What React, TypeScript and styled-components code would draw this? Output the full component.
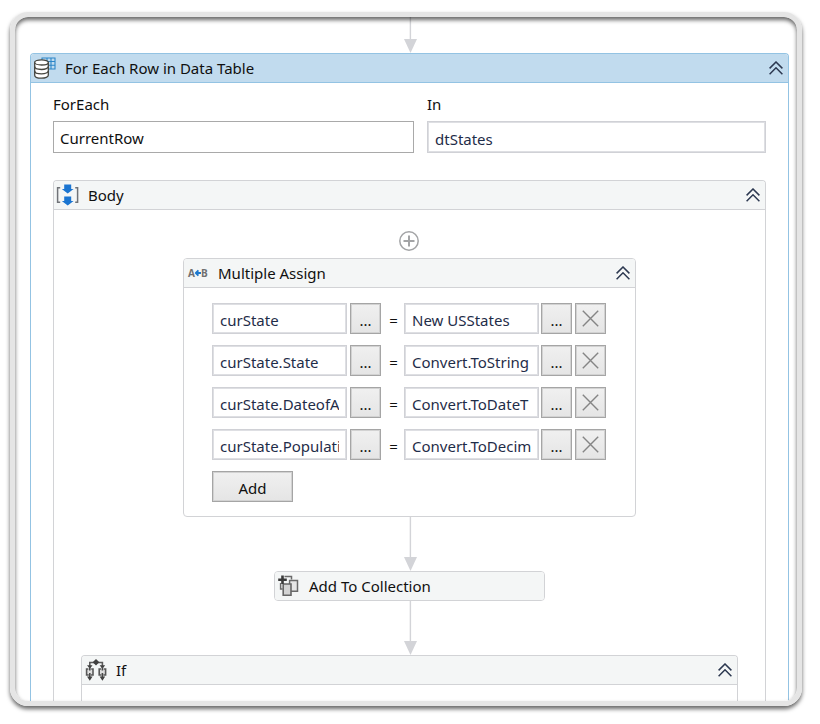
import React, { useState } from "react";
import styled, { createGlobalStyle, css } from "styled-components";

const GlobalStyle = createGlobalStyle`
  *, *::before, *::after {
    box-sizing: border-box;
  }
  body {
    margin: 0;
    background: #ffffff;
    color: #101010;
    font-family: "Noto Sans", "Open Sans", sans-serif;
    font-size: 15px;
    line-height: 20px;
  }
  input, button {
    font: inherit;
    color: inherit;
  }
`;

const Frame = styled.main`
  position: relative;
  margin: 12px 18px 18px 10px;
  padding: 0 8px 0 15px;
  border: 5px solid #e5e5e5;
  border-radius: 18px;
  overflow: hidden;
  box-shadow: 0 3px 4px rgba(0, 0, 0, 0.6);

  &::after {
    content: "";
    position: absolute;
    inset: 0;
    border-radius: 13px;
    box-shadow: inset 0 3px 4px rgba(0, 0, 0, 0.6);
    pointer-events: none;
  }
`;

const Flow = styled.div`
  display: flex;
  flex-direction: column;
  align-items: center;
`;

const borderTone = { active: "#93c3e3", plain: "#d2d3d6" };
type Tone = keyof typeof borderTone;

const Card = styled.section<{ $tone?: Tone; $open?: boolean; $width?: string }>`
  width: ${(p) => p.$width ?? "100%"};
  max-width: 100%;
  border: 1px solid ${(p) => borderTone[p.$tone ?? "plain"]};
  border-radius: 4px;
  background: #ffffff;
  overflow: hidden;
  ${(p) =>
    p.$open &&
    css`
      border-bottom: 0;
      border-radius: 4px 4px 0 0;
    `}
`;

const CardHeader = styled.header<{ $tone?: Tone; $single?: boolean }>`
  display: flex;
  align-items: center;
  height: ${(p) => (p.$single ? "28px" : "29px")};
  padding-right: 5px;
  background: ${(p) => (p.$tone === "active" ? "#c1dbee" : "#f4f6f6")};
  border-bottom: ${(p) => (p.$single ? "0" : `1px solid ${borderTone[p.$tone ?? "plain"]}`)};
`;

const IconSlot = styled.span`
  display: flex;
  align-items: center;
  flex: none;
  width: 34px;
  padding-left: 2px;
`;

const Title = styled.h2`
  flex: 1;
  margin: 0;
  padding-bottom: 1px;
  font-size: 15px;
  font-weight: 400;
  line-height: 20px;
  white-space: nowrap;
`;

const CollapseButton = styled.button`
  display: flex;
  padding: 0;
  border: 0;
  background: none;
`;

const FieldGrid = styled.div`
  display: grid;
  grid-template-columns: 361fr 339fr;
  column-gap: 13px;
  padding: 11px 22px 27px;
`;

const Field = styled.label`
  display: flex;
  flex-direction: column;
  gap: 7px;
`;

const NameInput = styled.input`
  width: 100%;
  height: 32px;
  padding: 2px 6px 0;
  border: 1px solid #a9a9a9;
  background: #ffffff;
  border-radius: 0;
  outline: none;
`;

const ExpressionInput = styled.input<{ $width?: string; $height?: string }>`
  width: ${(p) => p.$width ?? "100%"};
  height: ${(p) => p.$height ?? "32px"};
  padding: 3px 7px 0;
  border: 1px solid #d0d1d6;
  box-shadow: inset 0 0 0 1px #dedfe3;
  border-radius: 0;
  background: #ffffff;
  color: #1f2d49;
  outline: none;
`;

const BodySlot = styled.div`
  padding: 0 22px;
`;

const BodyFlow = styled(Flow)`
  padding: 20px 27px 0;
`;

const AddActivity = styled.button`
  display: flex;
  margin-bottom: 6px;
  padding: 0;
  border: 0;
  background: none;
`;

const AssignBody = styled.div`
  display: flex;
  flex-direction: column;
  align-items: flex-start;
  gap: 11px;
  padding: 15px 28px 14px;
`;

const AssignRow = styled.div`
  display: flex;
  align-items: center;
`;

const Pair = styled.div<{ $gap: string }>`
  display: flex;
  gap: ${(p) => p.$gap};
`;

const Equals = styled.span`
  width: 23px;
  padding: 2px 0 0 2px;
  text-align: center;
`;

const GrayButton = styled.button<{ $wide?: boolean }>`
  display: flex;
  align-items: center;
  justify-content: center;
  width: ${(p) => (p.$wide ? "81px" : "31px")};
  height: 31px;
  padding: ${(p) => (p.$wide ? "3px 0 0" : "0")};
  border: 1px solid #a5a5a5;
  box-shadow: inset 0 0 0 1px #d2d2d2;
  background: linear-gradient(#f0f0f0, #e5e5e5);
`;

const Dots = styled.span`
  padding-top: 3px;
`;

const IfBody = styled.div`
  height: 16px;
`;

const LetterIcon = styled.span`
  display: flex;
  align-items: center;
  padding-left: 2px;
  font: 700 10px/12px "Open Sans", sans-serif;
  color: #707070;
`;

const Chevrons = () => (
  <svg width="14" height="14" viewBox="0 0 14 14" fill="none" stroke="#2c3850" strokeWidth="1.5" aria-hidden="true">
    <path d="M.6 7.4 7 1l6.4 6.4M.6 13.2 7 6.8l6.4 6.4" />
  </svg>
);

const Arrow = ({ line }: { line: number }) => (
  <svg width="15" height={line + 14} viewBox={`0 0 15 ${line + 14}`} fill="#d3d4d8" aria-hidden="true">
    <path d={`M7.7 0h1.4v${line}h-1.4z`} />
    <path d={`M2 ${line}h13l-6.5 14z`} />
  </svg>
);

const DataTableIcon = () => (
  <svg width="24" height="24" viewBox="0 0 24 24" fill="none" aria-hidden="true">
    <path d="M9 2h13v11H9zM9 5.5h13M9 9.2h13M14 2v11M18 2v11" stroke="#2c86c8" strokeWidth="1.1" />
    <path d="M1.7 6.4v12.8c0 1.7 3 3 6.8 3s6.8-1.3 6.8-3V6.4z" fill="#fff" stroke="#45453f" strokeWidth="1.3" />
    <ellipse cx="8.5" cy="6.4" rx="6.8" ry="2.6" fill="#fff" stroke="#45453f" strokeWidth="1.3" />
    <path d="M1.7 10.6c0 1.7 3 2.9 6.8 2.9s6.8-1.2 6.8-2.9M1.7 14.9c0 1.7 3 2.9 6.8 2.9s6.8-1.2 6.8-2.9" stroke="#45453f" strokeWidth="1.3" />
  </svg>
);

const SequenceIcon = () => (
  <svg width="24" height="24" viewBox="0 0 24 24" fill="none" aria-hidden="true">
    <path d="M4.2 4.7H1.6v14.6h2.6M19.2 4.7h2.4v14.6h-2.4" stroke="#707378" strokeWidth="1.5" />
    <path d="M8.2 1.5h7V6h2.4l-5.9 4.6L5.8 6h2.4zM8.2 13.5h7V18h2.4l-5.9 4.6L5.8 18h2.4z" fill="#1b75d1" />
  </svg>
);

const CollectionIcon = () => (
  <svg width="24" height="24" viewBox="0 0 24 24" fill="none" aria-hidden="true">
    <path d="M7.5 2.5h7v3M3.6 9v6h2" stroke="#6a6a6a" strokeWidth="1.5" />
    <path d="M12.6 6.5h7.9v10.8h-7.9z" fill="#e6e6e6" stroke="#6a6a6a" strokeWidth="1.5" />
    <path d="M6.2 10h7.8v11.3H6.2z" fill="#d3d3d3" stroke="#666" strokeWidth="1.6" />
    <path d="M1.2 5.8h8.6M5.5 1.5v8.6" stroke="#3a3a3a" strokeWidth="2.6" />
  </svg>
);

const BranchIcon = () => (
  <svg width="24" height="24" viewBox="0 0 24 24" fill="none" aria-hidden="true">
    <path d="M5.8 8V4.5h12.6V8" stroke="#5a5a5a" strokeWidth="1.6" />
    <path d="m12 1 3.3 3.3L12 7.6 8.7 4.3zM3 7.2h5.6L5.8 10.8zM15.6 7.2h5.6l-2.8 3.6z" fill="#414141" />
    <path d="M3 11h5.6v6H3zM15.6 11h5.6v6h-5.6z" fill="#dedede" />
    <path d="M4.4 11H2.6v6h2.2M7.2 11H9v6H6.8M17 11h-1.8v6h2.2M19.8 11h1.8v6h-2.2" stroke="#585858" strokeWidth="1.6" />
    <path d="M5.8 9v3.5M5.8 15v5M18.4 9v3.5M18.4 15v5" stroke="#494949" strokeWidth="1.6" />
    <path d="M3 18.4h5.6l-2.8 4.4zM15.6 18.4h5.6l-2.8 4.4z" fill="#414141" />
  </svg>
);

const AssignIcon = () => (
  <LetterIcon aria-hidden="true">
    A
    <svg width="6" height="8" viewBox="0 0 6 8" fill="none" stroke="#1c79cf" strokeWidth="1.8">
      <path d="M.8 4H6M3.4 1.4.8 4l2.6 2.6" />
    </svg>
    B
  </LetterIcon>
);

const PlusCircle = () => (
  <svg width="22" height="22" viewBox="0 0 22 22" fill="none" stroke="#a3a4a6" aria-hidden="true">
    <circle cx="10" cy="11" r="9.2" strokeWidth="1.5" />
    <path d="M4.5 11h11M10 5.5v11" strokeWidth="2" />
  </svg>
);

const Cross = () => (
  <svg width="17" height="17" viewBox="0 0 17 17" fill="none" stroke="#858585" strokeWidth="1.4" aria-hidden="true">
    <path d="m.8.8 15.4 15.4M16.2.8.8 16.2" />
  </svg>
);

type HeaderProps = { icon: React.ReactNode; title: string; tone?: Tone; single?: boolean };

const ActivityHeader = ({ icon, title, tone, single }: HeaderProps) => (
  <CardHeader $tone={tone} $single={single}>
    <IconSlot>{icon}</IconSlot>
    <Title>{title}</Title>
    {!single && (
      <CollapseButton type="button" aria-label={`Collapse ${title}`}>
        <Chevrons />
      </CollapseButton>
    )}
  </CardHeader>
);

const initialRows = [
  { to: "curState", value: "New USStates" },
  { to: "curState.State", value: "Convert.ToString" },
  { to: "curState.DateofA", value: "Convert.ToDateT" },
  { to: "curState.Populati", value: "Convert.ToDecim" },
];

const MoreButton = ({ label }: { label: string }) => (
  <GrayButton type="button" aria-label={label}>
    <Dots>...</Dots>
  </GrayButton>
);

export default function App() {
  const [rows, setRows] = useState(initialRows);
  const edit = (index: number, key: "to" | "value", text: string) =>
    setRows(rows.map((row, i) => (i === index ? { ...row, [key]: text } : row)));

  return (
    <>
      <GlobalStyle />
      <Frame>
        <Flow>
          <Arrow line={22} />
          <Card $tone="active" $open>
            <ActivityHeader icon={<DataTableIcon />} title="For Each Row in Data Table" tone="active" />
            <FieldGrid>
              <Field>
                ForEach
                <NameInput defaultValue="CurrentRow" />
              </Field>
              <Field>
                In
                <ExpressionInput defaultValue="dtStates" />
              </Field>
            </FieldGrid>
            <BodySlot>
              <Card $open>
                <ActivityHeader icon={<SequenceIcon />} title="Body" />
                <BodyFlow>
                  <AddActivity type="button" aria-label="Add activity">
                    <PlusCircle />
                  </AddActivity>
                  <Card $width="453px">
                    <ActivityHeader icon={<AssignIcon />} title="Multiple Assign" />
                    <AssignBody>
                      {rows.map((row, i) => (
                        <AssignRow key={i}>
                          <Pair $gap="3px">
                            <ExpressionInput
                              $width="135px"
                              $height="31px"
                              aria-label={`Assign to ${i + 1}`}
                              value={row.to}
                              onChange={(e) => edit(i, "to", e.target.value)}
                            />
                            <MoreButton label={`Edit target ${i + 1}`} />
                          </Pair>
                          <Equals>=</Equals>
                          <Pair $gap="3px">
                            <Pair $gap="2px">
                              <ExpressionInput
                                $width="135px"
                                $height="31px"
                                aria-label={`Value ${i + 1}`}
                                value={row.value}
                                onChange={(e) => edit(i, "value", e.target.value)}
                              />
                              <MoreButton label={`Edit value ${i + 1}`} />
                            </Pair>
                            <GrayButton
                              type="button"
                              aria-label={`Remove assignment ${i + 1}`}
                              onClick={() => setRows(rows.filter((_, n) => n !== i))}
                            >
                              <Cross />
                            </GrayButton>
                          </Pair>
                        </AssignRow>
                      ))}
                      <GrayButton type="button" $wide onClick={() => setRows([...rows, { to: "", value: "" }])}>
                        Add
                      </GrayButton>
                    </AssignBody>
                  </Card>
                  <Arrow line={40} />
                  <Card $width="271px">
                    <ActivityHeader icon={<CollectionIcon />} title="Add To Collection" single />
                  </Card>
                  <Arrow line={40} />
                  <Card $open>
                    <ActivityHeader icon={<BranchIcon />} title="If" />
                    <IfBody />
                  </Card>
                </BodyFlow>
              </Card>
            </BodySlot>
          </Card>
        </Flow>
      </Frame>
    </>
  );
}
